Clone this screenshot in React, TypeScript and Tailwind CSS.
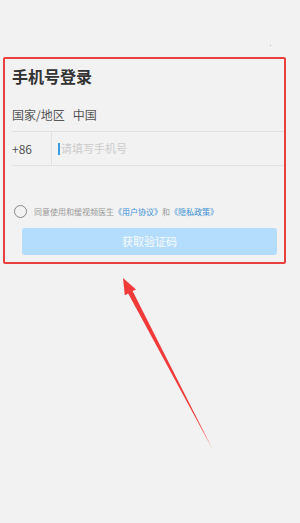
const font = { fontFamily: '"Noto Sans CJK SC", "Noto Sans", sans-serif' };

const App = () => {
  return (
    <div className="relative w-[300px] h-[523px] bg-[#f2f2f2] pt-[57px] pl-[3px]" style={font}>
      {/* small dot top right */}
      <div className="absolute left-[270px] top-[45px] w-[1px] h-[1px] bg-[#bbb]" />

      <div className="w-[283px] h-[207px] border-2 border-[#e8403e] rounded-[2px] flex flex-col">
        <h1 className="ml-[7px] mt-[5px] h-[24px] leading-[24px] text-[16px] font-bold text-[#333]">
          手机号登录
        </h1>

        <div className="ml-[7px] mt-[10px] h-[34px] flex items-center border-b border-[#e2e2e2] text-[12px] text-[#555]">
          <span>国家/地区</span>
          <span className="ml-[8px]">中国</span>
        </div>

        <div className="ml-[7px] h-[34px] flex items-stretch border-b border-[#e2e2e2]">
          <div className="w-[40px] flex items-center border-r border-[#e2e2e2] text-[12px] text-[#555]">+86</div>
          <div className="flex items-center pl-[6px]">
            <span className="w-[2px] h-[12px] bg-[#3a9be0]" />
            <span className="ml-[1px] text-[11px] text-[#cccccc]">请填写手机号</span>
          </div>
        </div>

        <div className="ml-[9px] mt-[39px] flex items-center">
          <span className="w-[13px] h-[13px] rounded-full border border-[#8a8a8a]" />
          <p className="ml-[7px] text-[8px] text-[#999] whitespace-nowrap">
            同意使用和缓视频医生
            <span className="text-[#3b8fd6]">《用户协议》</span>
            和
            <span className="text-[#3b8fd6]">《隐私政策》</span>
          </p>
        </div>

        <button className="ml-[17px] mt-[10px] w-[255px] h-[27px] rounded-[3px] bg-[#b4dcfc] text-[11px] text-white/90">
          获取验证码
        </button>
      </div>

      {/* annotation arrow */}
      <svg className="absolute left-0 top-0 pointer-events-none" width="300" height="523">
        <polygon
          points="123,278 136,289.5 132.6,291 213,450 128.2,293.4 124.8,295.2"
          fill="#f13a3a"
        />
      </svg>
    </div>
  );
};

export default App;
